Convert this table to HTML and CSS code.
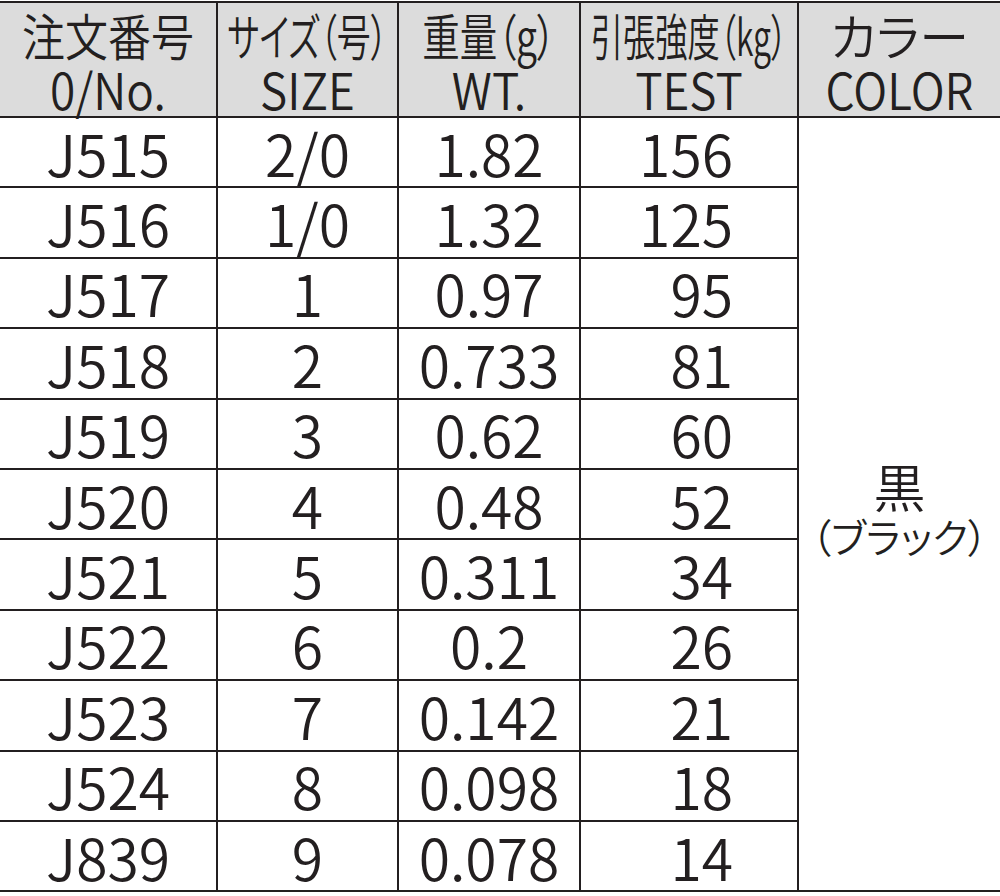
FILE: index.html
```html
<!DOCTYPE html>
<html lang="ja">
<head>
<meta charset="utf-8">
<title>Spec table</title>
<link rel="stylesheet" href="styles.css">
</head>
<body>
<table class="spec">
  <colgroup>
    <col class="c-no"><col class="c-size"><col class="c-wt"><col class="c-test"><col class="c-color">
  </colgroup>
  <thead>
    <tr>
      <th><span class="jp">注文番号</span><span class="en">0/No.</span></th>
      <th><span class="jp wide sz">サイズ（号）</span><span class="en">SIZE</span></th>
      <th><span class="jp wide wt">重量（g）</span><span class="en">WT.</span></th>
      <th><span class="jp wide ts">引張強度（kg）</span><span class="en">TEST</span></th>
      <th><span class="jp cl">カラー</span><span class="en">COLOR</span></th>
    </tr>
  </thead>
  <tbody>
    <tr><td>J515</td><td>2/0</td><td>1.82</td><td class="test">156</td>
      <td class="color" rowspan="11"><span class="kuro">黒</span><span class="black">（ブラック）</span></td></tr>
    <tr><td>J516</td><td>1/0</td><td>1.32</td><td class="test">125</td></tr>
    <tr><td>J517</td><td>1</td><td>0.97</td><td class="test">95</td></tr>
    <tr><td>J518</td><td>2</td><td>0.733</td><td class="test">81</td></tr>
    <tr><td>J519</td><td>3</td><td>0.62</td><td class="test">60</td></tr>
    <tr><td>J520</td><td>4</td><td>0.48</td><td class="test">52</td></tr>
    <tr><td>J521</td><td>5</td><td>0.311</td><td class="test">34</td></tr>
    <tr><td>J522</td><td>6</td><td>0.2</td><td class="test">26</td></tr>
    <tr><td>J523</td><td>7</td><td>0.142</td><td class="test">21</td></tr>
    <tr><td>J524</td><td>8</td><td>0.098</td><td class="test">18</td></tr>
    <tr><td>J839</td><td>9</td><td>0.078</td><td class="test">14</td></tr>
  </tbody>
</table>
</body>
</html>
```

FILE: styles.css
```css
html, body {
  margin: 0;
  padding: 0;
  background: #ffffff;
}

body {
  font-family: "Noto Sans CJK JP", "Noto Sans", sans-serif;
  color: #231f20;
}

.spec {
  width: 1000px;
  margin-top: 1px;
  border-collapse: collapse;
  table-layout: fixed;
}

.c-no { width: 217px; }
.c-size { width: 181px; }
.c-wt { width: 182px; }
.c-test { width: 218px; }
.c-color { width: 202px; }

.spec th,
.spec td {
  border: 2px solid #231f20;
  padding: 0;
  text-align: center;
  vertical-align: middle;
  white-space: nowrap;
}

.spec th:first-child,
.spec td:first-child {
  border-left: none;
}

.spec th:last-child,
.spec td.color {
  border-right: none;
}

.spec thead tr {
  height: 115px;
}

.spec th {
  background: #dcdcdc;
  font-weight: 350;
  padding-top: 3px;
}

.jp {
  display: block;
  font-size: 50px;
  line-height: 54px;
  font-feature-settings: "palt";
  transform: scaleX(0.86);
}

.jp.wide { margin: 0 -60px; }
.jp.sz { transform: scaleX(0.68); }
.jp.wt { transform: scaleX(0.75); }
.jp.ts { transform: scaleX(0.645); }
.jp.cl { transform: scaleX(1.0); }

.en {
  display: block;
  font-size: 50px;
  line-height: 54px;
  transform: scaleX(0.92);
}

.spec tbody tr {
  height: 70.4px;
}

.spec td {
  font-size: 57px;
  line-height: 57px;
  font-weight: 350;
}

.spec td.test {
  text-align: right;
  padding-right: 64px;
}

.spec td.color {
  padding-top: 8px;
}

.kuro {
  display: block;
  font-size: 52px;
  line-height: 56px;
  font-weight: 350;
}

.black {
  display: block;
  margin: 0 -30px;
  font-size: 40px;
  line-height: 44px;
  font-weight: 350;
  font-feature-settings: "palt";
}
```
